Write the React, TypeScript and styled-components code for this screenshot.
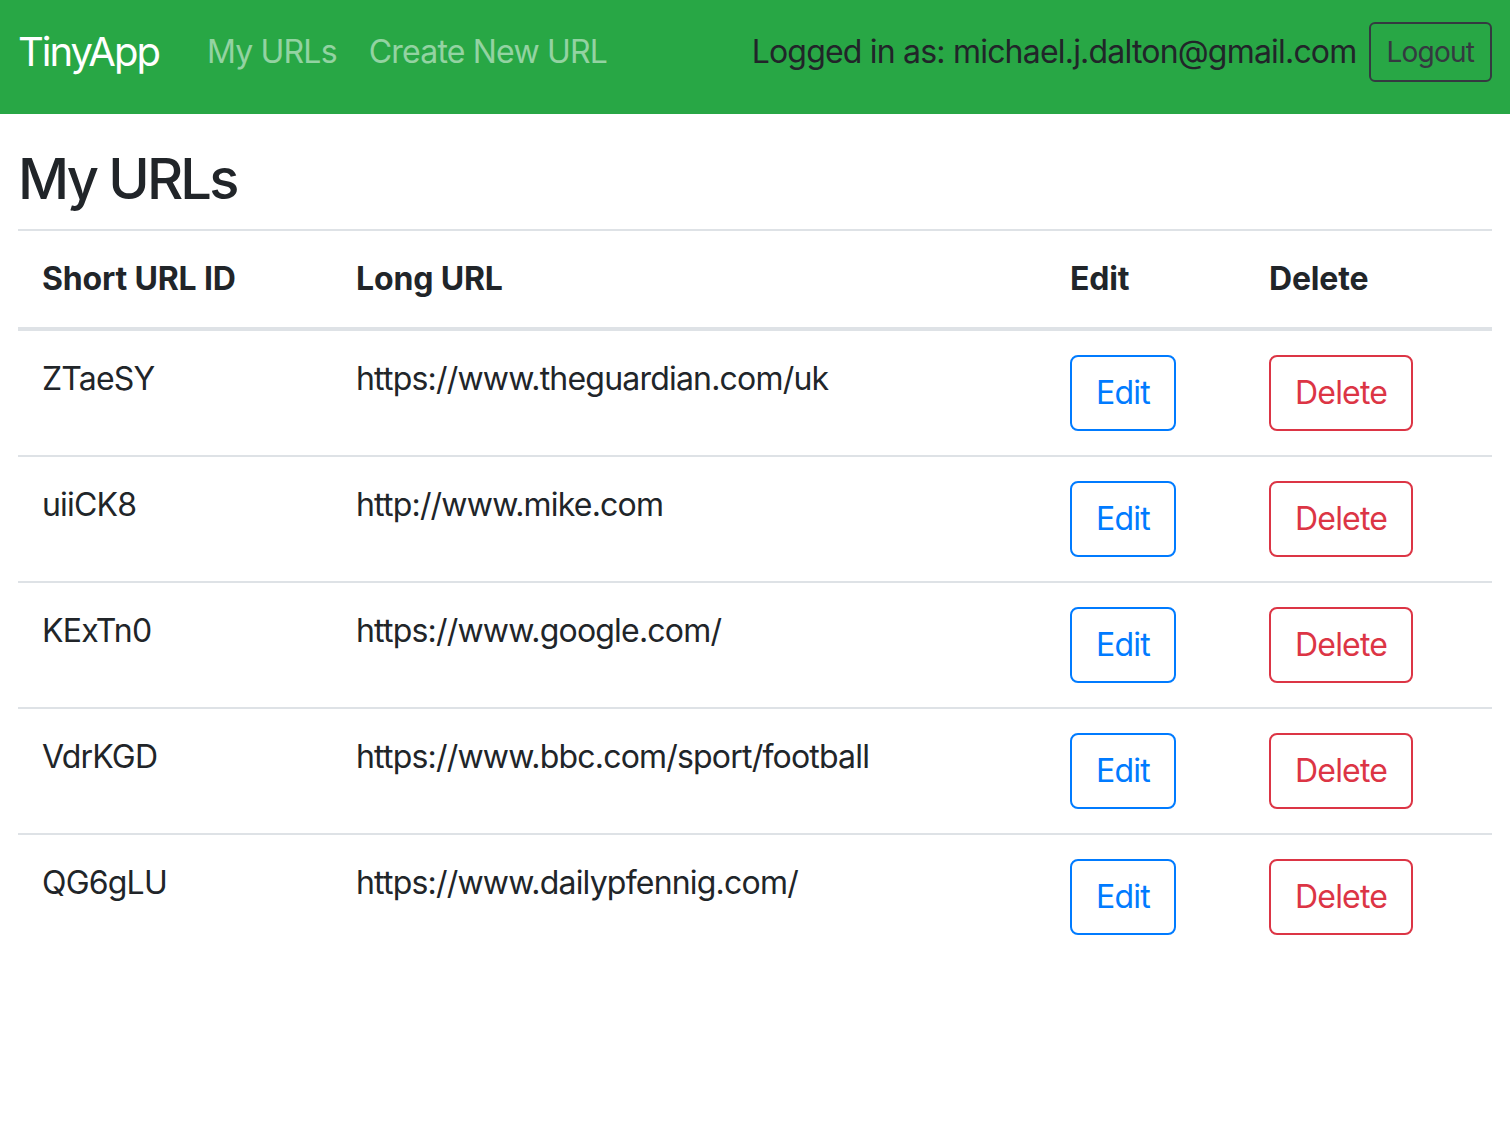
import React from "react";
import styled, { createGlobalStyle } from "styled-components";

const GlobalStyle = createGlobalStyle`
  html, body { margin: 0; padding: 0; background: #fff; }
  body {
    font-family: Inter, "Noto Sans", sans-serif;
    color: #212529;
    font-size: 32px;
    line-height: 1.5;
    letter-spacing: -0.025em;
  }
  * { box-sizing: border-box; }
`;

const Navbar = styled.nav`
  display: flex;
  align-items: center;
  height: 114px;
  padding: 0 18px 10px;
  background: #28a745;
`;

const Brand = styled.a`
  font-size: 40px;
  line-height: 1.5;
  letter-spacing: -0.05em;
  color: #fff;
  text-decoration: none;
  margin-right: 32px;
`;

const NavLink = styled.a`
  font-size: 32px;
  padding: 0 16px;
  color: rgba(255, 255, 255, 0.5);
  text-decoration: none;
`;

const UserArea = styled.div`
  margin-left: auto;
  display: flex;
  align-items: center;
  gap: 12px;
`;

const NavText = styled.span`
  font-size: 32px;
  color: #212529;
`;

const OutlineButton = styled.button<{ $tone: string; $small?: boolean }>`
  font-family: inherit;
  letter-spacing: inherit;
  background: transparent;
  color: ${(p) => p.$tone};
  border: 2px solid ${(p) => p.$tone};
  border-radius: ${(p) => (p.$small ? "6px" : "8px")};
  font-size: ${(p) => (p.$small ? "28px" : "32px")};
  line-height: ${(p) => (p.$small ? "42px" : "48px")};
  padding: ${(p) => (p.$small ? "7px 16px" : "12px 24px")};
  cursor: pointer;
`;

const Main = styled.main`
  padding: 0 18px;
`;

const Heading = styled.h3`
  margin: 32px 0 16px;
  font-size: 56px;
  font-weight: 500;
  line-height: 1.2;
  letter-spacing: -0.05em;
`;

const Table = styled.table`
  width: 100%;
  border-collapse: collapse;
`;

const HeadCell = styled.th`
  text-align: left;
  font-weight: 700;
  letter-spacing: -0.005em;
  padding: 24px;
  border-top: 2px solid #dee2e6;
  border-bottom: 4px solid #dee2e6;
  vertical-align: bottom;
`;

const Cell = styled.td`
  padding: 24px;
  border-top: 2px solid #dee2e6;
  vertical-align: top;
`;

const urls = [
  { id: "ZTaeSY", long: "https://www.theguardian.com/uk" },
  { id: "uiiCK8", long: "http://www.mike.com" },
  { id: "KExTn0", long: "https://www.google.com/" },
  { id: "VdrKGD", long: "https://www.bbc.com/sport/football" },
  { id: "QG6gLU", long: "https://www.dailypfennig.com/" },
];

export default function App() {
  return (
    <>
      <GlobalStyle />
      <Navbar>
        <Brand href="#">TinyApp</Brand>
        <NavLink href="#">My URLs</NavLink>
        <NavLink href="#">Create New URL</NavLink>
        <UserArea>
          <NavText>Logged in as: michael.j.dalton@gmail.com</NavText>
          <OutlineButton $tone="#343a40" $small>
            Logout
          </OutlineButton>
        </UserArea>
      </Navbar>
      <Main>
        <Heading>My URLs</Heading>
        <Table>
          <colgroup>
            <col style={{ width: 314 }} />
            <col style={{ width: 714 }} />
            <col style={{ width: 199 }} />
            <col style={{ width: 247 }} />
          </colgroup>
          <thead>
            <tr>
              <HeadCell>Short URL ID</HeadCell>
              <HeadCell>Long URL</HeadCell>
              <HeadCell>Edit</HeadCell>
              <HeadCell>Delete</HeadCell>
            </tr>
          </thead>
          <tbody>
            {urls.map((u) => (
              <tr key={u.id}>
                <Cell>{u.id}</Cell>
                <Cell>{u.long}</Cell>
                <Cell>
                  <OutlineButton $tone="#007bff">Edit</OutlineButton>
                </Cell>
                <Cell>
                  <OutlineButton $tone="#dc3545">Delete</OutlineButton>
                </Cell>
              </tr>
            ))}
          </tbody>
        </Table>
      </Main>
    </>
  );
}
